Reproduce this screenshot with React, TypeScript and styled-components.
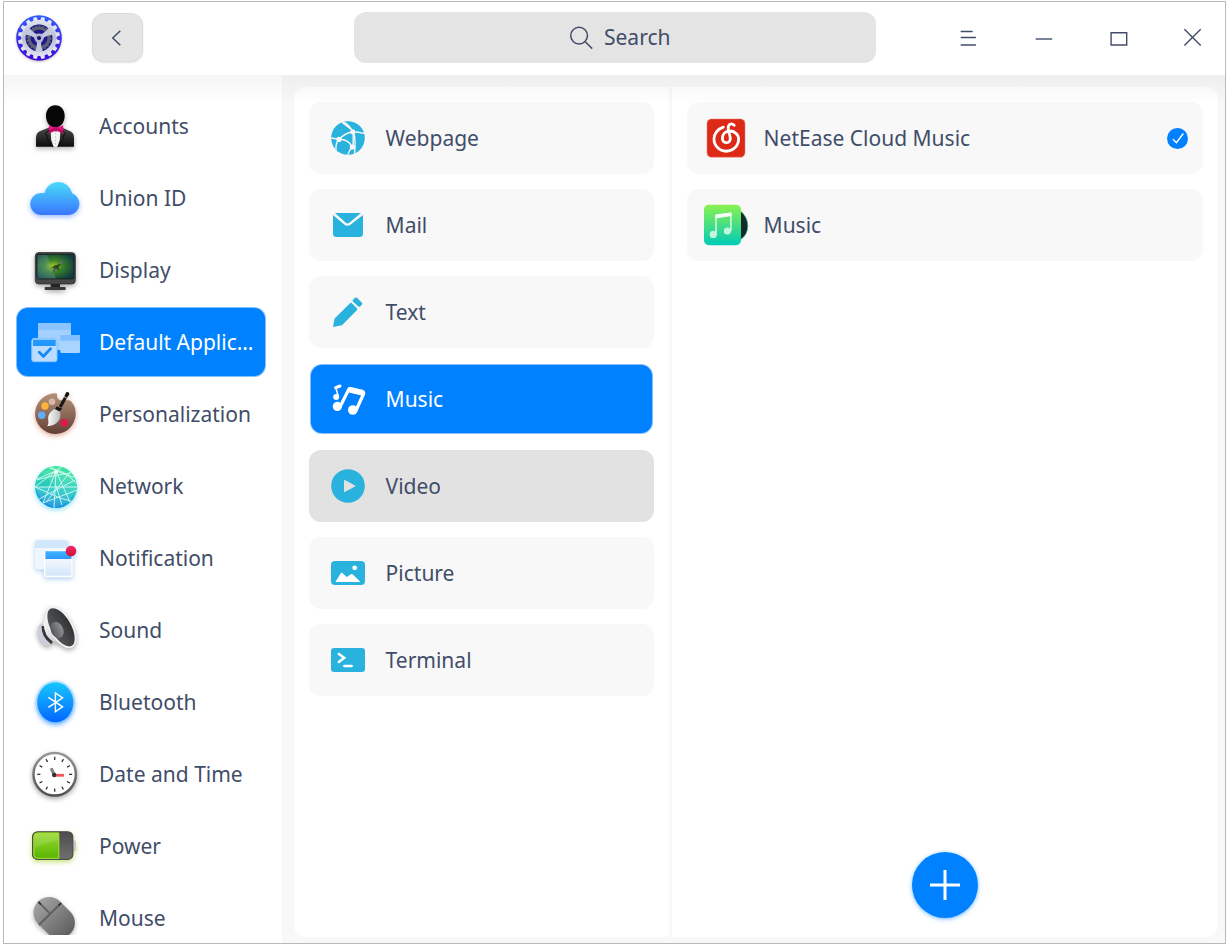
import React from "react";
import styled, { createGlobalStyle, css } from "styled-components";

const GlobalStyle = createGlobalStyle`
  *, *::before, *::after { box-sizing: border-box; }
  body { margin: 0; background: #fff; }
  button { font: inherit; color: inherit; background: none; border: 0; padding: 0; }
`;

const Page = styled.div`
  width: 1230px;
  height: 949px;
  padding: 1px 4px 5px 3px;
  background: #fff;
  font-family: "Noto Sans", sans-serif;
  font-size: 21px;
  line-height: 28px;
  color: #414d68;
  overflow: hidden;
`;

const Window = styled.div`
  display: flex;
  flex-direction: column;
  width: 100%;
  height: 100%;
  border: 1px solid #b9b9b9;
  overflow: hidden;
`;

const Header = styled.header`
  display: flex;
  flex: 0 0 73px;
  height: 73px;
  padding: 10px 7px 0 10px;
  background: #fff;
`;

const BackButton = styled.button`
  display: flex;
  width: 51px;
  height: 49px;
  margin: 1px 0 0 28px;
  border: 1px solid #dcdcdc;
  border-radius: 12px;
  background: #e5e5e5;
  box-shadow: 0 1px 2px rgba(0, 0, 0, 0.1);
`;

const SearchBox = styled.div`
  display: flex;
  align-items: center;
  width: 522px;
  height: 51px;
  margin-left: 211px;
  padding: 0 0 1px 212px;
  gap: 8px;
  border-radius: 12px;
  background: #e4e4e4;
`;

const WindowButtons = styled.div`
  display: flex;
  margin-left: auto;
  gap: 25px;
  svg { display: block; }
`;

const Body = styled.main`
  position: relative;
  display: flex;
  flex: 1;
  min-height: 0;
  background: #f8f8f8;
  &::after {
    content: "";
    position: absolute;
    inset: 0 0 auto 0;
    height: 27px;
    background: linear-gradient(rgba(0, 0, 0, 0.038), rgba(0, 0, 0, 0.005));
    pointer-events: none;
  }
`;

const Sidebar = styled.nav`
  width: 278px;
  padding: 15px 16px 0 12px;
  background: #fff;
`;

const SidebarClip = styled.div`
  height: 845px;
  overflow: hidden;
`;

const selectedStyle = css`
  border: 1px solid rgba(255, 255, 255, 0.5);
  background: #0081ff;
  color: #fff;
`;

const NavItem = styled.div<{ $selected?: boolean }>`
  display: flex;
  align-items: center;
  height: 70px;
  margin: 1px 0;
  padding-left: 8px;
  gap: 14px;
  border: 1px solid transparent;
  border-radius: 12px;
  white-space: nowrap;
  & + & { margin-top: 2px; }
  ${(p) => p.$selected && selectedStyle}
  svg { flex: none; }
`;

const Panel = styled.section`
  display: flex;
  width: 924px;
  height: 850px;
  margin: 12px 0 0 12px;
  border-radius: 12px;
  background: #fff;
  overflow: hidden;
`;

const Categories = styled.div`
  display: flex;
  flex-direction: column;
  gap: 15px;
  width: 378px;
  padding: 15px 15px 0 15px;
  border-right: 3px solid #f8f8f8;
`;

const AppsColumn = styled.div`
  display: flex;
  flex-direction: column;
  flex: 1;
  gap: 15px;
  padding: 15px 15px 19px 15px;
`;

const Card = styled.div<{ $state?: "selected" | "hover" }>`
  display: flex;
  align-items: center;
  flex: none;
  height: 72px;
  padding: 0 15px 0 9px;
  gap: 7.6px;
  border-radius: 12px;
  background: ${(p) => (p.$state === "hover" ? "#e2e2e2" : "#f8f8f8")};
  svg { flex: none; }
  ${(p) =>
    p.$state === "selected" &&
    css`
      ${selectedStyle}
      height: 70px;
      margin: 1px;
      padding-left: 7px;
    `}
`;

const CardLabel = styled.span`
  flex: 1;
`;

const AddButton = styled.button`
  display: grid;
  place-items: center;
  width: 66px;
  height: 66px;
  margin: auto auto 0;
  border-radius: 50%;
  background: #0081ff;
  box-shadow: 0 1px 4px rgba(0, 129, 255, 0.55);
`;

type IconProps = { children: React.ReactNode; shadow?: string };
const Icon = ({ children, shadow }: IconProps) => (
  <svg width="60" height="60" viewBox="0 0 60 60" fill="none" style={shadow ? { filter: `drop-shadow(0 2px 2.5px ${shadow})` } : undefined}>
    {children}
  </svg>
);

type GradProps = { id: string; from: string; to: string; mid?: string };
const Grad = ({ id, from, to, mid }: GradProps) => (
  <linearGradient id={id} x1="0" y1="0" x2="0" y2="1">
    <stop stopColor={from} />
    {mid && <stop offset=".5" stopColor={mid} />}
    <stop offset="1" stopColor={to} />
  </linearGradient>
);

const Logo = () => (
  <svg width="50" height="52" viewBox="-25 -26 50 52" fill="none" style={{ filter: "drop-shadow(0 1px 1px rgba(0,0,0,.25))" }}>
    <defs>
      <Grad id="lg" from="#2f5cff" to="#4407d8" />
      <linearGradient id="ls" x1="0" y1="-20" x2="0" y2="20" gradientUnits="userSpaceOnUse">
        <stop stopColor="#e4e7f3" />
        <stop offset=".5" stopColor="#b9bfd4" />
        <stop offset="1" stopColor="#e3e4f5" />
      </linearGradient>
    </defs>
    <circle r="22.8" fill="url(#lg)" />
    <circle r="15.6" stroke="url(#ls)" strokeWidth="4.6" />
    {Array.from({ length: 16 }, (_, i) => (
      <path key={i} d="M-2.4 -17 L-1.7 -21 H1.7 L2.4 -17Z" fill="url(#ls)" transform={`rotate(${i * 22.5 + 11.25})`} />
    ))}
    <circle r="13.4" fill="#241a7c" />
    <circle r="9.9" stroke="#5d6178" strokeWidth="3.2" />
    <circle r="11.9" stroke="#5d6178" strokeWidth="1.6" strokeDasharray="1.8 1.9" />
    <circle r="8.3" fill="#221a8c" />
    {[0, 120, 240].map((a) => (
      <path key={a} d="M-4 14 Q-2 9 -2 5 L-4 0 H4 L2 5 Q2 9 4 14Z" fill="#c3c8dc" transform={`rotate(${a})`} />
    ))}
    <circle r="4.6" fill="#b4b9cf" />
    <circle r="2.1" fill="#1c1470" />
  </svg>
);

const AccountsIcon = () => (
  <Icon shadow="rgba(0,0,0,.3)">
    <defs>
      <Grad id="ac" from="#4a4a4a" to="#0c0c0c" />
    </defs>
    <path d="M11 50.8V42Q11 36 16 34.8L24 31.5H37L44 34.8Q49 36 49 42V50.8Z" fill="url(#ac)" />
    <path d="M25.5 33H35.5L34.8 44L32.3 51H28.5L26.2 44Z" fill="#f2f2f2" />
    <path d="M30.5 37V50" stroke="#aaa" strokeWidth=".8" strokeDasharray="1 2.4" />
    <path d="M24 34L20 38L23 40L22 42L28.2 51M37 34L41 38L38 40L39 42L32.8 51" stroke="#111" strokeWidth="1" />
    <path d="M30.3 9.3C36 9.3 39.8 14 39.7 20C39.6 26.5 35.8 31.5 30.3 31.5S21.1 26.5 21 20C20.9 14 24.8 9.3 30.3 9.3Z" fill="#060606" />
    <path d="M24 29.2L29 31.5H32.5L38.2 29.2V37.4L32.5 35H29L24 37.4Z" fill="#ed1284" />
    <path d="M24 34.5L29 32V35L24 37.4M38.2 34.5L32.5 32V35L38.2 37.4" fill="#b80a64" />
    <rect x="28.6" y="30.8" width="4" height="4.8" rx="1" fill="#c50d6b" />
  </Icon>
);

const CloudIcon = () => (
  <Icon shadow="rgba(58,120,255,.5)">
    <defs>
      <linearGradient id="cl" x1="0" y1="14" x2="0" y2="47" gradientUnits="userSpaceOnUse">
        <stop stopColor="#49dcfa" />
        <stop offset="1" stopColor="#3a75fd" />
      </linearGradient>
    </defs>
    <path d="M16.3 47A11 11 0 0 1 16.3 25H19.6A14 14 0 0 1 47 25.3A11.2 11.2 0 0 1 44 47Z" fill="url(#cl)" />
  </Icon>
);

const DisplayIcon = () => (
  <Icon shadow="rgba(0,0,0,.35)">
    <defs>
      <radialGradient id="ds" cx=".45" cy=".48" r=".6">
        <stop stopColor="#a4c91b" />
        <stop offset=".4" stopColor="#3b8228" />
        <stop offset="1" stopColor="#0e3c42" />
      </radialGradient>
    </defs>
    <path d="M25.7 43H35V48H25.7Z" fill="#242424" />
    <rect x="19.7" y="47" width="21" height="3" rx=".8" fill="#393939" />
    <rect x="10.3" y="12.6" width="40" height="31.3" rx="3.5" fill="#474747" stroke="#303030" strokeWidth=".8" />
    <rect x="11.8" y="14.3" width="37.2" height="24.6" rx="2" fill="url(#ds)" stroke="#101c18" strokeWidth=".8" />
    <path d="M12.5 15H22L31 38.5H12.5Z" fill="#9cc8e8" opacity=".22" />
    <path d="M32 25L39.5 19.5L36 24L33.5 27L34.5 31L31 28.5L27.5 33L29.5 27.5L25.5 28.5L29.5 25.5Z" fill="#27481f" />
    <path d="M32.5 25L39.5 19.5L36 23.5Z" fill="#aa7bc7" />
    <path d="M27.5 33L31 29L30 28Z" fill="#71409b" />
  </Icon>
);

const DefaultAppsIcon = () => (
  <Icon>
    <path d="M14 11H45Q46 11 46 12V38H13V12Q13 11 14 11Z" fill="#a3d0ff" />
    <path d="M14 11H45Q46 11 46 12V18H13V12Q13 11 14 11Z" fill="#8ac5ff" />
    <rect x="35.3" y="23" width="19.7" height="18" rx="1" fill="#a9d4ff" />
    <path d="M35.3 24Q35.3 23 36.3 23H54Q55 23 55 24V28.8H35.3Z" fill="#80bfff" />
    <rect x="6.8" y="26.4" width="25.2" height="23.3" rx="2.2" fill="#bbdcff" stroke="#86c5ff" strokeWidth="1" />
    <path d="M8 27.7H30.7V34H8Z" fill="#2098ff" />
    <path d="M14.3 40.3L18.4 44.2L25.6 36.8" stroke="#128af8" strokeWidth="2.8" strokeLinecap="round" />
  </Icon>
);

const PaletteIcon = () => (
  <Icon shadow="rgba(190,70,30,.45)">
    <defs>
      <Grad id="pa" from="#b29378" mid="#8d6b59" to="#623d35" />
      <linearGradient id="br"><stop stopColor="#fff" /><stop offset="1" stopColor="#bbb" /></linearGradient>
    </defs>
    <path d="M31.5 9.4C32.7 10 31.4 12.3 32.5 14C34.7 18.3 42 15.4 45 16.5C49 20 50.7 24 50.7 29.7A20.3 20.3 0 1 1 31.5 9.4Z" fill="url(#pa)" />
    <circle cx="20" cy="22" r="3.7" fill="#ffb43a" />
    <circle cx="27" cy="17.7" r="3.3" fill="#d7b9a9" />
    <circle cx="16.7" cy="31.3" r="3.8" fill="#62acf5" />
    <circle cx="39.3" cy="38.7" r="3.8" fill="#df174b" />
    <path d="M42.4 10L35.2 23" stroke="#191919" strokeWidth="3.2" strokeDasharray="3.6 .6 20" />
    <circle cx="42.4" cy="9.9" r="1.9" fill="#111" />
    <path d="M31.5 22.5L37.3 24.5L34.5 27.5L30 25Z" fill="#151515" />
    <path d="M29.4 25L35 27.8C37 35.5 31.5 42 22.2 42.2C24.4 39.8 22.9 37 23.2 33.3C23.8 29 26.8 26.8 29.4 25Z" fill="url(#br)" />
  </Icon>
);

const NetworkIcon = () => (
  <Icon shadow="rgba(40,200,240,.5)">
    <defs>
      <linearGradient id="nw" x1=".6" y1="0" x2=".4" y2="1">
        <stop stopColor="#3ee79c" /><stop offset=".6" stopColor="#23c4c4" /><stop offset="1" stopColor="#0a89e4" />
      </linearGradient>
      <clipPath id="nc"><circle cx="31" cy="31" r="21" /></clipPath>
    </defs>
    <circle cx="31" cy="31" r="21" fill="url(#nw)" />
    <g clipPath="url(#nc)" stroke="#e6fff8" strokeWidth="1" opacity=".85">
      <path d="M31 31L16 16L33 12L48 20L52 31L44 46L30 52L18 46L10 31Z" fill="#fff" fillOpacity=".14" stroke="none" />
      <path d="M31 15L18 47M31 15L29 52M31 15L45 46M31 15L12 23M31 15L51 22M31 15L24 9M31 15L39 9M10 31H52M10 31L35 42L49 46M10 31L31 15M14 43L50 24M18 47L52 34M24 12Q40 14 52 28M22 45L45 16M12 24Q24 20 46 17M37 49L31 30" />
    </g>
    <circle cx="31" cy="16" r="2" fill="#fff" opacity=".8" />
  </Icon>
);

const NotificationIcon = () => (
  <Icon shadow="rgba(60,140,220,.4)">
    <defs>
      <Grad id="nb" from="#42b3ff" to="#2d98ff" />
      <Grad id="ni" from="#f3f7fd" to="#d4e6fa" />
      <Grad id="nd" from="#f3266a" to="#cf1238" />
    </defs>
    <rect x="10" y="12.3" width="33" height="29" rx="2" fill="#f0f6fe" />
    <path d="M10 20V14.3Q10 12.3 12 12.3H41Q43 12.3 43 14.3V20Z" fill="#d3e7fc" />
    <rect x="19" y="22" width="28.7" height="27.2" rx="2.5" fill="#fff" />
    <rect x="20.4" y="31" width="26" height="16.8" rx="1.2" fill="url(#ni)" />
    <path d="M20.4 23.2H46.4V31H20.4Z" fill="url(#nb)" />
    <circle cx="46" cy="23.1" r="5.3" fill="url(#nd)" />
  </Icon>
);

const SoundIcon = () => (
  <Icon shadow="rgba(0,0,0,.35)">
    <defs>
      <linearGradient id="so"><stop stopColor="#f6f6f6" /><stop offset="1" stopColor="#9a9a9a" /></linearGradient>
      <linearGradient id="sc"><stop stopColor="#58595c" /><stop offset="1" stopColor="#313234" /></linearGradient>
      <linearGradient id="si"><stop stopColor="#55565a" /><stop offset="1" stopColor="#909296" /></linearGradient>
    </defs>
    <path d="M16 23.5Q11.5 27 12.8 34.5Q14.5 42.5 21 46L26 44.5L18 24Z" fill="#cccfda" />
    <path d="M18 26Q17.5 36 27 43" stroke="#373737" strokeWidth="2.8" />
    <path d="M23 9Q19.5 14 18.5 24Q20 36 29 42L45 48Z" fill="url(#so)" />
    <ellipse cx="36" cy="27.3" rx="10.8" ry="22.2" transform="rotate(-30 36 27.3)" fill="url(#sc)" stroke="#f2f2f2" strokeWidth="1.7" />
    <ellipse cx="32" cy="30" rx="6.2" ry="8.6" transform="rotate(-24 32 30)" fill="url(#si)" />
  </Icon>
);

const BluetoothIcon = () => (
  <Icon shadow="rgba(0,120,255,.6)">
    <defs><Grad id="bl" from="#18c7fc" to="#0466ff" /></defs>
    <ellipse cx="30.3" cy="30.3" rx="20" ry="22" fill="#55bdff" opacity=".28" />
    <ellipse cx="30.3" cy="30.3" rx="18" ry="20" fill="url(#bl)" />
    <path d="M23.4 25.3L37.6 34.8L30.4 39.7V21L37.6 25.8L23.4 35.3" stroke="#fff" strokeWidth="1.4" />
  </Icon>
);

const ClockIcon = () => (
  <Icon shadow="rgba(0,0,0,.35)">
    <defs><Grad id="ck" from="#969696" to="#515151" /></defs>
    <circle cx="29.7" cy="30.3" r="21.2" fill="#fff" stroke="url(#ck)" strokeWidth="2.5" />
    {Array.from({ length: 12 }, (_, i) => (
      <path key={i} d="M29.7 12.8V16" stroke="#222" strokeWidth="1.2" transform={`rotate(${i * 30} 29.7 30.3)`} />
    ))}
    <path d="M29.3 31L26.7 25.4" stroke="#858585" strokeWidth="3.2" strokeLinecap="round" />
    <path d="M29 31.3H39" stroke="#f2575b" strokeWidth="2.8" />
    <circle cx="29.2" cy="31" r="2.2" fill="#333" />
  </Icon>
);

const PowerIcon = () => (
  <Icon shadow="rgba(140,200,0,.5)">
    <defs>
      <Grad id="pw" from="#9adb34" to="#58b400" />
      <Grad id="pd" from="#4c4c4c" to="#707070" />
    </defs>
    <path d="M47 24.3H49Q51 24.3 51 27V32Q51 35 49 35H47Z" fill="#c9c9c9" />
    <rect x="7.6" y="15.8" width="40.2" height="27.6" rx="5" fill="url(#pd)" stroke="#4b4d4b" strokeWidth="1.2" />
    <path d="M12.5 16.9H33.8V42.3H12.5Q8.8 42.3 8.8 38.5V20.5Q8.8 16.9 12.5 16.9Z" fill="url(#pw)" stroke="#a5ec26" strokeWidth="1" />
    <path d="M10 18H33V24Q20 27 10 32Z" fill="#fff" opacity=".12" />
  </Icon>
);

const MouseIcon = () => (
  <Icon shadow="rgba(0,0,0,.3)">
    <defs><Grad id="mo" from="#a2a2a2" to="#5e5e5e" /></defs>
    <rect x="-15.7" y="-15.7" width="31.4" height="45.5" rx="15.7" fill="url(#mo)" transform="translate(24.2 24.8) rotate(-45)" />
    <path d="M14 37L36.2 15M13.3 13.8L24.3 24.8" stroke="#5e5e5e" strokeWidth="1.8" />
    <path d="M13.3 13.8L16 16.5M33.5 17.5L36.2 15" stroke="#2d2d2d" strokeWidth="1.6" />
  </Icon>
);

const CYAN = "#29b2dd";

const WebpageIcon = () => (
  <Icon>
    <defs><clipPath id="wc"><circle cx="30" cy="30" r="16.8" /></clipPath></defs>
    <circle cx="30" cy="30" r="16.8" fill={CYAN} />
    <g clipPath="url(#wc)" stroke="#f8f8f8" strokeWidth="1.4">
      <path d="M24.5 13.5Q31 16 34.7 23.7Q40 24 47 25.6M34.7 23.7Q27 25 21 31.3L13 30M21 31.3Q17.5 35 18 42M21 31.3Q30 31 34.3 39Q31.5 42 29.5 47M35.5 24Q38 31 36.5 47M23.5 14Q30 19 34 22" />
      <path d="M35.2 24V39" />
    </g>
    <circle cx="34.7" cy="23.8" r="2.5" fill="#f8f8f8" />
    <circle cx="21" cy="31.4" r="2.6" fill="#f8f8f8" />
    <circle cx="34.3" cy="39" r="2.6" fill="#f8f8f8" />
  </Icon>
);

const MailIcon = () => (
  <Icon>
    <path d="M17 18H43L31.3 27.8Q29.5 29 27.8 27.8Z" fill={CYAN} />
    <path d="M15 20L26.5 29.8Q29.5 31.9 32.5 29.8L45 20V38.5Q45 42 41.5 42H18.5Q15 42 15 38.5Z" fill={CYAN} />
  </Icon>
);

const PencilIcon = () => (
  <Icon>
    <path d="M15 45L16.6 36.5L32 21.2Q33 20.3 34 21.2L39 26.2Q39.8 27 39 27.9L24 43.3Z" fill={CYAN} />
    <path d="M34.8 18L37 15.8Q38 15 39 15.8L44 20.8Q44.8 21.8 44 22.6L42.2 24.5Q41.3 25.2 40.3 24.4L34.9 19.4Q34.3 18.6 34.8 18Z" fill={CYAN} />
  </Icon>
);

const NotesIcon = () => (
  <Icon>
    <circle cx="19.3" cy="37.4" r="4.6" fill="#fff" />
    <circle cx="34.8" cy="41" r="4.8" fill="#fff" />
    <path d="M22 38L30.8 20.3Q31.3 19.2 32.5 19.5L44.2 22.3Q46.3 23 45.5 25L38 41.5" stroke="#fff" strokeWidth="3.2" />
    <path d="M30.5 20.8L45 24.4" stroke="#fff" strokeWidth="5" />
    <circle cx="18.2" cy="28" r="3" fill="#fff" />
    <path d="M20.2 27L17.9 19.2L22 17.5" stroke="#fff" strokeWidth="1.6" />
    <path d="M17.6 18.7L22 17" stroke="#fff" strokeWidth="3" strokeLinecap="round" />
  </Icon>
);

const VideoIcon = () => (
  <Icon>
    <circle cx="30" cy="30" r="16.8" fill={CYAN} />
    <path d="M26.8 24L37 29.4Q38 30 37 30.6L26.8 36Q26 36.3 26 35.6V24.4Q26 23.7 26.8 24Z" fill="#e2e2e2" />
  </Icon>
);

const PictureIcon = () => (
  <Icon>
    <rect x="13" y="18" width="34" height="24" rx="4" fill={CYAN} />
    <circle cx="36.7" cy="24.8" r="2.4" fill="#fff" />
    <path d="M18.2 39Q17.3 39 17.8 38.2L22.8 30.2Q23.7 29 24.6 30.2L28.8 33.9L33 31.2Q33.8 30.6 34.6 31.2L41.8 38.2Q42.4 39 41.4 39Z" fill="#fff" />
  </Icon>
);

const TerminalIcon = () => (
  <Icon>
    <rect x="13" y="18" width="34" height="24" rx="3" fill={CYAN} />
    <path d="M20.8 23.9L26.2 27.8L20.8 32" stroke="#fff" strokeWidth="2.5" strokeLinecap="round" />
    <path d="M26.3 36H33.7" stroke="#fff" strokeWidth="2.5" strokeLinecap="round" />
  </Icon>
);

const NetEaseIcon = () => (
  <Icon>
    <rect x="11" y="11" width="38" height="38.2" rx="4.5" fill="#dd2a17" stroke="#ea8177" strokeWidth=".5" />
    <path d="M27.3 19.2C21.5 21 18 26 18 31A12.3 12.1 0 0 0 42.6 31.3C42.6 26 38 22.8 33.5 23C29.2 23.2 26.4 26.3 26.4 30.2C26.4 36 34.3 36.2 34.3 30.6C34.3 27.5 32.2 23.5 32.2 20C32.2 16 35.5 14.7 38.2 17.3" stroke="#fff" strokeWidth="2.8" strokeLinecap="round" />
  </Icon>
);

const MusicAppIcon = () => (
  <Icon>
    <defs><Grad id="mu" from="#8af24f" mid="#45de83" to="#00ccb8" /></defs>
    <path d="M44 15.5Q51.8 22 51.8 31T44 45Z" fill="#142a2c" stroke="#2fbf71" strokeWidth=".6" />
    <rect x="8" y="9.8" width="37" height="40.5" rx="5" fill="url(#mu)" />
    <path d="M20 39.5V20.5L34.9 18V36" stroke="#e3fbee" strokeWidth="1.4" />
    <path d="M19.4 20.2Q19.4 19.5 20.3 19.3L34 17.8Q35.5 17.7 35.5 18.8V21L19.4 23.5Z" fill="#f4fff8" />
    <circle cx="17.3" cy="39.4" r="3.6" fill="#c3f5df" />
    <circle cx="31.4" cy="36" r="3.6" fill="#c3f5df" />
  </Icon>
);

const navItems: { label: string; icon: React.FC; selected?: boolean }[] = [
  { label: "Accounts", icon: AccountsIcon },
  { label: "Union ID", icon: CloudIcon },
  { label: "Display", icon: DisplayIcon },
  { label: "Default Applic…", icon: DefaultAppsIcon, selected: true },
  { label: "Personalization", icon: PaletteIcon },
  { label: "Network", icon: NetworkIcon },
  { label: "Notification", icon: NotificationIcon },
  { label: "Sound", icon: SoundIcon },
  { label: "Bluetooth", icon: BluetoothIcon },
  { label: "Date and Time", icon: ClockIcon },
  { label: "Power", icon: PowerIcon },
  { label: "Mouse", icon: MouseIcon },
];

const categories: { label: string; icon: React.FC; state?: "selected" | "hover" }[] = [
  { label: "Webpage", icon: WebpageIcon },
  { label: "Mail", icon: MailIcon },
  { label: "Text", icon: PencilIcon },
  { label: "Music", icon: NotesIcon, state: "selected" },
  { label: "Video", icon: VideoIcon, state: "hover" },
  { label: "Picture", icon: PictureIcon },
  { label: "Terminal", icon: TerminalIcon },
];

const controlPaths = [
  "M17.7 19.5H29.7M17.7 25.5H32.9M17.7 33H32.9",
  "M17.7 27H34.2",
  "M18.1 20.7H33.7V33H18.1Z",
  "M16.4 17.2L32.7 33.5M32.7 17.2L16.4 33.5",
];

export default function App() {
  return (
    <Page>
      <GlobalStyle />
      <Window>
        <Header>
          <Logo />
          <BackButton aria-label="Back">
            <svg width="49" height="47" viewBox="0 0 49 47" fill="none">
              <path d="M27.3 16.7L19.8 24L27.3 31.3" stroke="#414d68" strokeWidth="1.5" />
            </svg>
          </BackButton>
          <SearchBox>
            <svg width="30" height="30" viewBox="0 0 30 30" fill="none" stroke="#414d68" strokeWidth="1.5">
              <circle cx="13.1" cy="13.6" r="8.4" />
              <path d="M19.2 19.7L26.2 26.6" />
            </svg>
            Search
          </SearchBox>
          <WindowButtons>
            {controlPaths.map((d) => (
              <svg key={d} width="50" height="50" viewBox="0 0 50 50" fill="none" stroke="#414d68" strokeWidth="1.4">
                <path d={d} />
              </svg>
            ))}
          </WindowButtons>
        </Header>
        <Body>
          <Sidebar>
            <SidebarClip>
              {navItems.map(({ label, icon: ItemIcon, selected }) => (
                <NavItem key={label} $selected={selected}>
                  <ItemIcon />
                  {label}
                </NavItem>
              ))}
            </SidebarClip>
          </Sidebar>
          <Panel>
            <Categories>
              {categories.map(({ label, icon: ItemIcon, state }) => (
                <Card key={label} $state={state}>
                  <ItemIcon />
                  <CardLabel>{label}</CardLabel>
                </Card>
              ))}
            </Categories>
            <AppsColumn>
              <Card>
                <NetEaseIcon />
                <CardLabel>NetEase Cloud Music</CardLabel>
                <svg width="21" height="21" viewBox="0 0 21 21" fill="none">
                  <circle cx="10.5" cy="10.5" r="10.5" fill="#0081ff" />
                  <path d="M6 11.3L9.4 14.7L16.3 5.5" stroke="#fff" strokeWidth="1.4" />
                </svg>
              </Card>
              <Card>
                <MusicAppIcon />
                <CardLabel>Music</CardLabel>
              </Card>
              <AddButton aria-label="Add">
                <svg width="30" height="30" viewBox="0 0 30 30" stroke="#fff" strokeWidth="3">
                  <path d="M15 0V30M0 15H30" />
                </svg>
              </AddButton>
            </AppsColumn>
          </Panel>
        </Body>
      </Window>
    </Page>
  );
}
